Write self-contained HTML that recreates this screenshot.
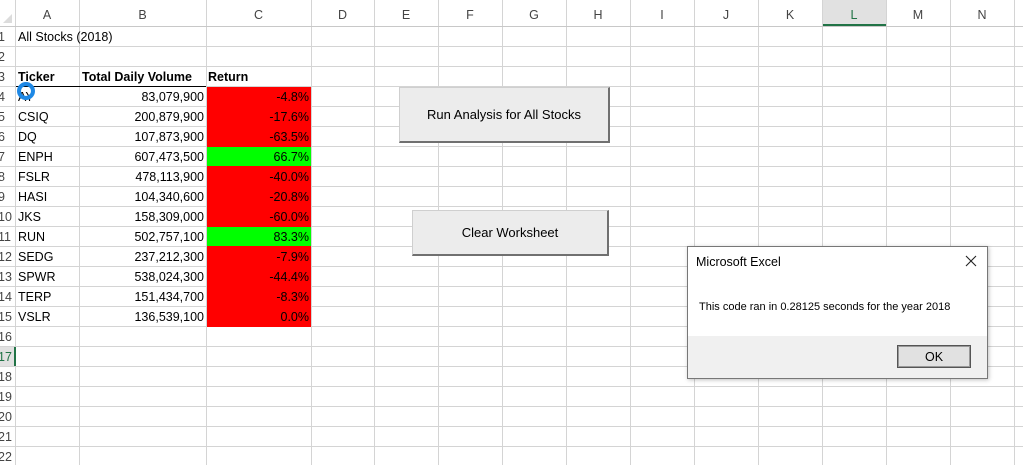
<!DOCTYPE html>
<html><head><meta charset="utf-8"><style>
*{margin:0;padding:0;box-sizing:border-box}
body{width:1023px;height:465px;overflow:hidden;background:#fff;position:relative;font-family:"Liberation Sans",Calibri,sans-serif;font-size:12.5px;color:#000}
.a{position:absolute}
.vl{position:absolute;top:0;width:1px;height:465px;background:#d4d4d4}
.hl{position:absolute;left:0;height:1px;width:1023px;background:#d4d4d4}
.ch{position:absolute;top:0;height:26px;line-height:30px;text-align:center;color:#444;font-size:12.5px}
.rn{position:absolute;left:-2px;width:14px;height:20px;line-height:20px;color:#444;font-size:12.5px}
.c{position:absolute;height:20px;line-height:21px;white-space:nowrap}
.btn{position:absolute;background:#ececec;border:1px solid #cfcfcf;border-right:2px solid #707070;border-bottom:2px solid #707070;text-align:center;font-size:13px}
</style></head><body>
<div class="vl" style="left:15px"></div><div class="vl" style="left:79px"></div><div class="vl" style="left:206px"></div><div class="vl" style="left:311px"></div><div class="vl" style="left:374px"></div><div class="vl" style="left:438px"></div><div class="vl" style="left:502px"></div><div class="vl" style="left:566px"></div><div class="vl" style="left:630px"></div><div class="vl" style="left:694px"></div><div class="vl" style="left:758px"></div><div class="vl" style="left:822px"></div><div class="vl" style="left:886px"></div><div class="vl" style="left:950px"></div><div class="vl" style="left:1014px"></div>
<div class="a" style="left:0;top:26px;width:1023px;height:440px;background:repeating-linear-gradient(to bottom,#d4d4d4 0,#d4d4d4 1px,transparent 1px,transparent 20px)"></div>
<div class="hl" style="top:26px;background:#c8c8c8"></div>
<div class="a" style="left:823px;top:0;width:63px;height:26px;background:#e1e1e1"></div>
<div class="a" style="left:823px;top:24px;width:63px;height:2px;background:#217346"></div>
<div class="a" style="left:0;top:347px;width:15px;height:19px;background:#e1e1e1"></div>
<div class="a" style="left:14px;top:347px;width:2px;height:19px;background:#217346"></div>
<div class="a" style="left:3px;top:14px;width:0;height:0;border-left:9px solid transparent;border-bottom:9px solid #dcdcdc"></div>
<div class="ch" style="left:15px;width:64px">A</div><div class="ch" style="left:79px;width:127px">B</div><div class="ch" style="left:206px;width:105px">C</div><div class="ch" style="left:311px;width:63px">D</div><div class="ch" style="left:374px;width:64px">E</div><div class="ch" style="left:438px;width:64px">F</div><div class="ch" style="left:502px;width:64px">G</div><div class="ch" style="left:566px;width:64px">H</div><div class="ch" style="left:630px;width:64px">I</div><div class="ch" style="left:694px;width:64px">J</div><div class="ch" style="left:758px;width:64px">K</div><div class="ch" style="left:822px;width:64px;color:#217346">L</div><div class="ch" style="left:886px;width:64px">M</div><div class="ch" style="left:950px;width:64px">N</div>
<div class="rn" style="top:27px">1</div><div class="rn" style="top:47px">2</div><div class="rn" style="top:67px">3</div><div class="rn" style="top:87px">4</div><div class="rn" style="top:107px">5</div><div class="rn" style="top:127px">6</div><div class="rn" style="top:147px">7</div><div class="rn" style="top:167px">8</div><div class="rn" style="top:187px">9</div><div class="rn" style="top:207px">10</div><div class="rn" style="top:227px">11</div><div class="rn" style="top:247px">12</div><div class="rn" style="top:267px">13</div><div class="rn" style="top:287px">14</div><div class="rn" style="top:307px">15</div><div class="rn" style="top:327px">16</div><div class="rn" style="top:347px;color:#217346">17</div><div class="rn" style="top:367px">18</div><div class="rn" style="top:387px">19</div><div class="rn" style="top:407px">20</div><div class="rn" style="top:427px">21</div><div class="rn" style="top:447px">22</div>
<div class="a" style="left:207px;top:87px;width:104px;height:240px;background:#f00"></div>
<div class="a" style="left:207px;top:147px;width:104px;height:19px;background:#0f0"></div>
<div class="a" style="left:207px;top:227px;width:104px;height:19px;background:#0f0"></div>
<div class="a" style="left:16px;top:86px;width:190px;height:1px;background:#000"></div>
<div class="c" style="left:18px;top:27px">All Stocks (2018)</div>
<div class="c" style="left:18px;top:67px;font-weight:bold">Ticker</div>
<div class="c" style="left:82px;top:67px;font-weight:bold">Total Daily Volume</div>
<div class="c" style="left:208px;top:67px;font-weight:bold">Return</div>
<div class="a" style="left:18px;top:87px;width:120px">
<div class="c" style="top:0">AY</div><div class="c" style="top:20px">CSIQ</div><div class="c" style="top:40px">DQ</div><div class="c" style="top:60px">ENPH</div><div class="c" style="top:80px">FSLR</div><div class="c" style="top:100px">HASI</div><div class="c" style="top:120px">JKS</div><div class="c" style="top:140px">RUN</div><div class="c" style="top:160px">SEDG</div><div class="c" style="top:180px">SPWR</div><div class="c" style="top:200px">TERP</div><div class="c" style="top:220px">VSLR</div></div>
<div class="a" style="left:80px;top:87px;width:124px;text-align:right">
<div style="height:20px;line-height:21px">83,079,900</div><div style="height:20px;line-height:21px">200,879,900</div><div style="height:20px;line-height:21px">107,873,900</div><div style="height:20px;line-height:21px">607,473,500</div><div style="height:20px;line-height:21px">478,113,900</div><div style="height:20px;line-height:21px">104,340,600</div><div style="height:20px;line-height:21px">158,309,000</div><div style="height:20px;line-height:21px">502,757,100</div><div style="height:20px;line-height:21px">237,212,300</div><div style="height:20px;line-height:21px">538,024,300</div><div style="height:20px;line-height:21px">151,434,700</div><div style="height:20px;line-height:21px">136,539,100</div></div>
<div class="a" style="left:207px;top:87px;width:102px;text-align:right">
<div style="height:20px;line-height:21px">-4.8%</div><div style="height:20px;line-height:21px">-17.6%</div><div style="height:20px;line-height:21px">-63.5%</div><div style="height:20px;line-height:21px">66.7%</div><div style="height:20px;line-height:21px">-40.0%</div><div style="height:20px;line-height:21px">-20.8%</div><div style="height:20px;line-height:21px">-60.0%</div><div style="height:20px;line-height:21px">83.3%</div><div style="height:20px;line-height:21px">-7.9%</div><div style="height:20px;line-height:21px">-44.4%</div><div style="height:20px;line-height:21px">-8.3%</div><div style="height:20px;line-height:21px">0.0%</div></div>
<div class="a" style="left:17px;top:82px;width:18px;height:18px;border:4px solid #1e88e5;border-radius:50%"></div>
<div class="btn" style="left:399px;top:87px;width:211px;height:56px;line-height:53px">Run Analysis for All Stocks</div>
<div class="btn" style="left:412px;top:210px;width:197px;height:46px;line-height:44px">Clear Worksheet</div>
<div class="a" style="left:687px;top:246px;width:301px;height:133px;border:1px solid #777;background:#fff;box-shadow:1px 1px 4px rgba(0,0,0,.25)">
<div class="a" style="left:8px;top:8px;font-size:12.5px">Microsoft Excel</div>
<svg class="a" style="left:277px;top:8px" width="12" height="12" viewBox="0 0 12 12"><path d="M1 1L11 11M11 1L1 11" stroke="#222" stroke-width="1.1"/></svg>
<div class="a" style="left:11px;top:54px;font-size:11px">This code ran in 0.28125 seconds for the year 2018</div>
<div class="a" style="left:0;top:89px;width:299px;height:42px;background:#f0f0f0"></div>
<div class="a" style="left:209px;top:98px;width:74px;height:23px;border:1px solid #555;background:#e1e1e1;text-align:center;line-height:20px;font-size:12.5px"><div style="border:1px solid #999;margin:0;height:21px">OK</div></div>
</div>
</body></html>
